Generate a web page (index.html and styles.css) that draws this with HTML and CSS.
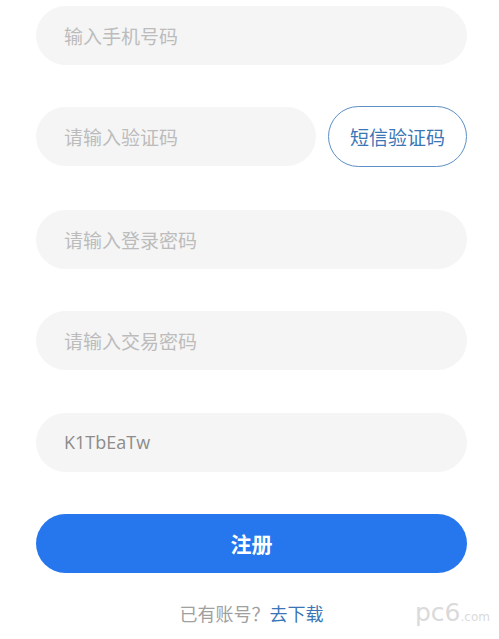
FILE: index.html
```html
<!DOCTYPE html>
<html lang="zh-CN">
<head>
  <meta charset="UTF-8">
  <meta name="viewport" content="width=device-width, initial-scale=1.0">
  <title>注册</title>
  <link rel="stylesheet" href="styles.css">
</head>
<body>
  <form class="register-form" onsubmit="return false">
    <div class="field">
      <input type="tel" placeholder="输入手机号码">
    </div>
    <div class="field-row">
      <div class="field">
        <input type="text" placeholder="请输入验证码">
      </div>
      <button type="button" class="sms-button">短信验证码</button>
    </div>
    <div class="field">
      <input type="password" placeholder="请输入登录密码">
    </div>
    <div class="field">
      <input type="password" placeholder="请输入交易密码">
    </div>
    <div class="field">
      <input type="text" value="K1TbEaTw" class="filled">
    </div>
    <button type="submit" class="submit-button">注册</button>
    <p class="footer-text">已有账号？<a href="#">去下载</a></p>
  </form>

  <!-- watermark -->
  <div class="watermark"><span class="wm-big">pc6</span><span class="wm-small">.com</span></div>
</body>
</html>
```

FILE: styles.css
```css
body {
  margin: 0;
  background: #fff;
  font-family: "Noto Sans CJK SC", "Noto Sans", sans-serif;
}

.register-form {
  display: flex;
  flex-direction: column;
  gap: 42.4px;
  padding: 6px 32px 0 36px;
}

.field {
  flex: 1;
}

.field input {
  box-sizing: border-box;
  width: 100%;
  height: 59px;
  border: none;
  outline: none;
  border-radius: 30px;
  background: #f5f5f5;
  padding: 0 28px;
  font-family: inherit;
  font-size: 19px;
  color: #8a8a8a;
}

.field input::placeholder {
  color: #bcbcbc;
}

.field input.filled {
  font-family: "Open Sans", "Noto Sans", sans-serif;
  font-size: 18px;
  color: #8c8c8c;
}

.field-row {
  display: flex;
  align-items: center;
  gap: 12px;
  margin-top: -1px;
}

.sms-button {
  box-sizing: border-box;
  width: 139px;
  height: 61px;
  border: 1px solid #5b8fc6;
  border-radius: 31px;
  background: #fff;
  color: #3a76b6;
  font-family: inherit;
  font-size: 19px;
  cursor: pointer;
}

.submit-button {
  height: 59px;
  border: none;
  border-radius: 30px;
  background: #2677ee;
  color: #fff;
  font-family: inherit;
  font-size: 21px;
  font-weight: bold;
  cursor: pointer;
}

.footer-text {
  margin: -15px 0 0;
  text-align: center;
  font-size: 18px;
  color: #a0a0a0;
}

.footer-text a {
  color: #3a76b6;
  text-decoration: none;
}

.watermark {
  position: absolute;
  left: 415px;
  top: 598px;
  color: #dadada;
  font-family: "DejaVu Sans", sans-serif;
}

.wm-big {
  font-size: 25px;
}

.wm-small {
  font-size: 12px;
}
```
